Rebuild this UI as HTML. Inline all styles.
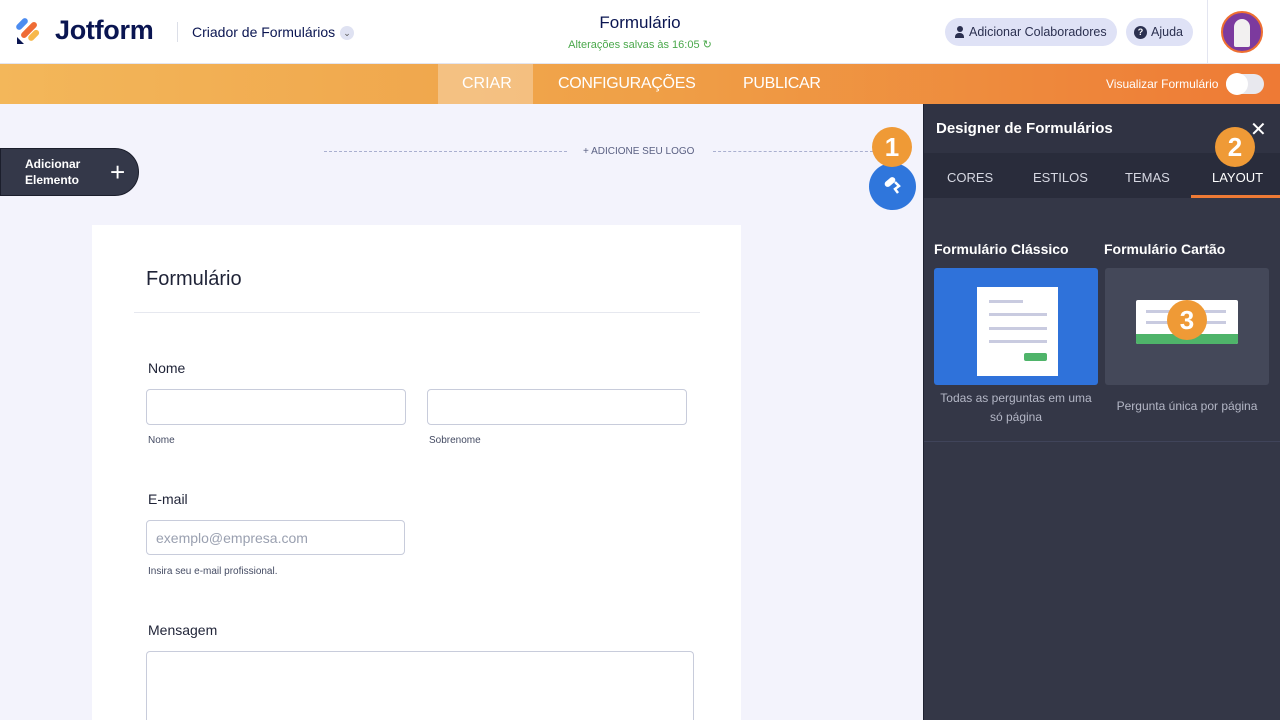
<!DOCTYPE html>
<html><head><meta charset="utf-8"><style>
*{box-sizing:border-box;margin:0;padding:0}
html,body{width:1280px;height:720px;overflow:hidden}
body{font-family:"Liberation Sans",sans-serif;background:#f3f3fc;position:relative;color:#0a1551}
.abs{position:absolute}
.hdr{left:0;top:0;width:1280px;height:64px;background:#fff;border-bottom:1px solid #e3e5f0}
.bar{left:0;top:64px;width:1280px;height:40px;background:linear-gradient(90deg,#f3b75a,#efa047 50%,#ee7a35)}
.badge{width:40px;height:40px;border-radius:50%;background:#ef9a36;color:#fff;font-weight:bold;font-size:26px;text-align:center;line-height:40px}
.pill{background:#dfe2f6;border-radius:14px;height:28px;font-size:12.5px;color:#2b3050;line-height:28px;padding:0 10px 0 24px}
.lbl{font-size:14px;color:#1f2337}
.inp{border:1px solid #c8ccdb;border-radius:4px;background:#fff}
.sub{font-size:10px;color:#444b63}
</style></head><body>
<div class="abs hdr"></div>
<svg class="abs" style="left:16px;top:16px" width="28" height="30" viewBox="0 0 28 30">
<rect x="3" y="1" width="6" height="14" rx="3" transform="rotate(45 6 8)" fill="#4c8cf0"/>
<rect x="10" y="4" width="6" height="20" rx="3" transform="rotate(45 13 14)" fill="#ef6c35"/>
<rect x="15" y="13" width="6" height="13" rx="3" transform="rotate(45 18 19)" fill="#f7b84b"/>
<path d="M1 28V21l7 7z" fill="#0a1551"/></svg>
<div class="abs" style="left:55px;top:15px;font-size:27px;font-weight:bold;color:#0a1551;letter-spacing:-0.3px">Jotform</div>
<div class="abs" style="left:177px;top:22px;width:1px;height:20px;background:#dcdfe8"></div>
<div class="abs" style="left:192px;top:24px;font-size:14px;color:#0a1551">Criador de Formulários</div>
<div class="abs" style="left:340px;top:26px;width:14px;height:14px;border-radius:50%;background:#dfe2f2;font-size:9px;text-align:center;line-height:14px;color:#555">⌄</div>
<div class="abs" style="left:0;width:1280px;top:13px;text-align:center;font-size:17px;color:#0a1551">Formulário</div>
<div class="abs" style="left:0;width:1280px;top:38px;text-align:center;font-size:11px;color:#4aa84b">Alterações salvas às 16:05 ↻</div>
<div class="abs pill" style="left:945px;top:18px;width:172px">Adicionar Colaboradores</div>
<div class="abs" style="left:955px;top:26px;width:9px;height:12px;"><div style="width:6px;height:6px;border-radius:50%;background:#2b3050;margin-left:1.5px"></div><div style="width:9px;height:5px;border-radius:4px 4px 0 0;background:#2b3050;margin-top:1px"></div></div>
<div class="abs pill" style="left:1126px;top:18px;width:67px;padding-left:25px">Ajuda</div>
<div class="abs" style="left:1134px;top:26px;width:13px;height:13px;border-radius:50%;background:#2b3050;color:#fff;font-size:9px;font-weight:bold;text-align:center;line-height:13px">?</div>
<div class="abs" style="left:1207px;top:0;width:1px;height:64px;background:#e3e5f0"></div>
<div class="abs" style="left:1221px;top:11px;width:42px;height:42px;border-radius:50%;background:#7c3a9e;border:2px solid #ee6f31"><div style="margin:6px 0 0 11px;width:16px;height:28px;background:#f2f0f0;border-radius:8px 8px 2px 2px"></div></div>
<div class="abs bar"></div>
<div class="abs" style="left:438px;top:64px;width:95px;height:40px;background:rgba(255,255,255,.3)"></div>
<div class="abs" style="left:462px;top:75px;font-size:16px;color:#fff">CRIAR</div>
<div class="abs" style="left:558px;top:75px;font-size:16px;color:#fff;letter-spacing:-0.3px">CONFIGURAÇÕES</div>
<div class="abs" style="left:743px;top:75px;font-size:16px;color:#fff;letter-spacing:-0.3px">PUBLICAR</div>
<div class="abs" style="left:1106px;top:77px;font-size:12px;color:#fff">Visualizar Formulário</div>
<div class="abs" style="left:1226px;top:74px;width:38px;height:20px;border-radius:10px;background:#e8e8ee"></div>
<div class="abs" style="left:1226px;top:73px;width:22px;height:22px;border-radius:50%;background:#fff"></div>
<!-- canvas -->
<div class="abs" style="left:0;top:148px;width:139px;height:48px;background:#343849;border-radius:0 24px 24px 0;border:1px solid #1b1e2c;color:#fff;font-size:12px;font-weight:bold;padding:7px 0 0 24px;line-height:16px">Adicionar<br>Elemento</div>
<div class="abs" style="left:110px;top:162px;color:#fff;font-size:26px;line-height:20px">+</div>
<div class="abs" style="left:324px;top:151px;width:243px;border-top:1px dashed #aab0d0"></div>
<div class="abs" style="left:713px;top:151px;width:160px;border-top:1px dashed #aab0d0"></div>
<div class="abs" style="left:583px;top:146px;font-size:10px;color:#5b6183">+ ADICIONE SEU LOGO</div>
<div class="abs" style="left:869px;top:163px;width:47px;height:47px;border-radius:50%;background:#2f76dc"></div>
<svg class="abs" style="left:882px;top:174px" width="22" height="22" viewBox="0 0 22 22"><rect x="2" y="5" width="12" height="6" rx="3" transform="rotate(-40 8 8)" fill="#fff"/><path d="M13 8l4 4-4 3 3 4" stroke="#fff" stroke-width="2.5" fill="none"/></svg>
<div class="abs badge" style="left:872px;top:127px">1</div>
<div class="abs" style="left:92px;top:225px;width:649px;height:495px;background:#fff"></div>
<div class="abs" style="left:146px;top:268px;font-size:20px;color:#1f2337">Formulário</div>
<div class="abs" style="left:134px;top:312px;width:566px;height:1px;background:#e6e8ef"></div>
<div class="abs lbl" style="left:148px;top:360px">Nome</div>
<div class="abs inp" style="left:146px;top:389px;width:260px;height:36px"></div>
<div class="abs inp" style="left:427px;top:389px;width:260px;height:36px"></div>
<div class="abs sub" style="left:148px;top:435px">Nome</div>
<div class="abs sub" style="left:429px;top:435px">Sobrenome</div>
<div class="abs lbl" style="left:148px;top:491px">E-mail</div>
<div class="abs inp" style="left:146px;top:520px;width:259px;height:35px;font-size:14px;color:#9aa0b0;padding:9px 9px">exemplo@empresa.com</div>
<div class="abs sub" style="left:148px;top:566px">Insira seu e-mail profissional.</div>
<div class="abs lbl" style="left:148px;top:622px">Mensagem</div>
<div class="abs inp" style="left:146px;top:651px;width:548px;height:69px;border-bottom:none;border-radius:4px 4px 0 0"></div>
<!-- panel -->
<div class="abs" style="left:923px;top:104px;width:357px;height:616px;background:#343747;border-left:1px solid #1e2130"></div>
<div class="abs" style="left:924px;top:104px;width:356px;height:49px;background:#303343"></div>
<div class="abs" style="left:936px;top:120px;font-size:15px;font-weight:bold;color:#fff">Designer de Formulários</div>
<div class="abs" style="left:1250px;top:117px;font-size:20px;color:#fff">✕</div>
<div class="abs" style="left:924px;top:153px;width:356px;height:45px;background:#292c3b"></div>
<div class="abs" style="left:947px;top:170px;font-size:13px;color:#d6d8e2">CORES</div>
<div class="abs" style="left:1033px;top:170px;font-size:13px;color:#d6d8e2">ESTILOS</div>
<div class="abs" style="left:1125px;top:170px;font-size:13px;color:#d6d8e2">TEMAS</div>
<div class="abs" style="left:1212px;top:170px;font-size:13px;color:#fff">LAYOUT</div>
<div class="abs" style="left:1191px;top:195px;width:89px;height:3px;background:#ee7a35"></div>
<div class="abs badge" style="left:1215px;top:127px">2</div>
<div class="abs" style="left:934px;top:241px;font-size:14px;font-weight:bold;color:#fff">Formulário Clássico</div>
<div class="abs" style="left:1104px;top:241px;font-size:14px;font-weight:bold;color:#fff">Formulário Cartão</div>
<div class="abs" style="left:934px;top:268px;width:164px;height:117px;background:#2f72da;border-radius:3px"></div>
<div class="abs" style="left:977px;top:287px;width:81px;height:89px;background:#fff"></div>
<div class="abs" style="left:989px;top:300px;width:34px;height:3px;background:#c9cbe0"></div>
<div class="abs" style="left:989px;top:313px;width:58px;height:3px;background:#c9cbe0"></div>
<div class="abs" style="left:989px;top:327px;width:58px;height:3px;background:#c9cbe0"></div>
<div class="abs" style="left:989px;top:340px;width:58px;height:3px;background:#c9cbe0"></div>
<div class="abs" style="left:1024px;top:353px;width:23px;height:8px;background:#4fb46a;border-radius:2px"></div>
<div class="abs" style="left:1105px;top:268px;width:164px;height:117px;background:#444859;border-radius:3px"></div>
<div class="abs" style="left:1136px;top:300px;width:102px;height:44px;background:#fff;border-radius:2px;overflow:hidden"><div style="position:absolute;left:0;bottom:0;width:102px;height:10px;background:#4fb46a"></div><div style="position:absolute;left:10px;top:10px;width:80px;height:3px;background:#c9cbe0"></div><div style="position:absolute;left:10px;top:21px;width:80px;height:3px;background:#c9cbe0"></div></div>
<div class="abs badge" style="left:1167px;top:300px">3</div>
<div class="abs" style="left:934px;top:389px;width:164px;text-align:center;font-size:12px;color:#b4b7c6;line-height:19px">Todas as perguntas em uma só página</div>
<div class="abs" style="left:1105px;top:399px;width:164px;text-align:center;font-size:12px;color:#b4b7c6">Pergunta única por página</div>
<div class="abs" style="left:924px;top:441px;width:356px;height:1px;background:#40445a"></div>
</body></html>
